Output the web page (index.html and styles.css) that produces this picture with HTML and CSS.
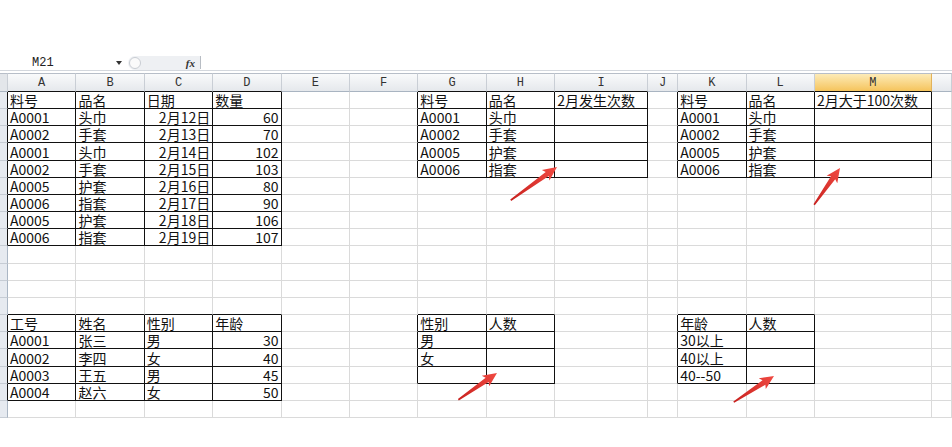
FILE: index.html
```html
<!DOCTYPE html>
<html>
<head>
    <title>Excel</title>
    <meta charset="utf-8">
    <link rel="stylesheet" href="styles.css">
</head>
<body>
    <div class="fbar">
        <div class="namebox">M21</div>
        <div class="drop"><span class="tri"></span></div>
        <div class="fxbox"><span class="knob"></span><span class="fx">fx</span></div>
        <div class="sep"></div>
    </div>

    <table class="grid">
        <colgroup>
            <col class="w-rh">
            <col class="w"><col class="w"><col class="w"><col class="w">
            <col class="w"><col class="w"><col class="w"><col class="w">
            <col class="w-i"><col class="w-j">
            <col class="w"><col class="w">
            <col class="w-m"><col class="w-n">
        </colgroup>
        <tr class="head"><th class="corner"></th><th class="et">A</th><th class="et">B</th><th class="et">C</th><th class="et">D</th><th>E</th><th>F</th><th class="et">G</th><th class="et">H</th><th class="et">I</th><th>J</th><th class="et">K</th><th class="et">L</th><th class="et sel">M</th><th></th></tr>
        <tr><td class="rh el"></td><td class="d">料号</td><td class="d">品名</td><td class="d">日期</td><td class="d">数量</td><td></td><td class="el"></td><td class="d">料号</td><td class="d">品名</td><td class="d">2月发生次数</td><td class="el"></td><td class="d">料号</td><td class="d">品名</td><td class="d">2月大于100次数</td><td></td></tr>
        <tr><td class="rh el"></td><td class="d">A0001</td><td class="d">头巾</td><td class="d r">2月12日</td><td class="d r">60</td><td></td><td class="el"></td><td class="d">A0001</td><td class="d">头巾</td><td class="d"></td><td class="el"></td><td class="d">A0001</td><td class="d">头巾</td><td class="d"></td><td></td></tr>
        <tr><td class="rh el"></td><td class="d">A0002</td><td class="d">手套</td><td class="d r">2月13日</td><td class="d r">70</td><td></td><td class="el"></td><td class="d">A0002</td><td class="d">手套</td><td class="d"></td><td class="el"></td><td class="d">A0002</td><td class="d">手套</td><td class="d"></td><td></td></tr>
        <tr><td class="rh el"></td><td class="d">A0001</td><td class="d">头巾</td><td class="d r">2月14日</td><td class="d r">102</td><td></td><td class="el"></td><td class="d">A0005</td><td class="d">护套</td><td class="d"></td><td class="el"></td><td class="d">A0005</td><td class="d">护套</td><td class="d"></td><td></td></tr>
        <tr><td class="rh el"></td><td class="d">A0002</td><td class="d">手套</td><td class="d r">2月15日</td><td class="d r">103</td><td></td><td class="el"></td><td class="d">A0006</td><td class="d">指套</td><td class="d"></td><td class="el"></td><td class="d">A0006</td><td class="d">指套</td><td class="d"></td><td></td></tr>
        <tr><td class="rh el"></td><td class="d">A0005</td><td class="d">护套</td><td class="d r">2月16日</td><td class="d r">80</td><td></td><td></td><td></td><td></td><td></td><td></td><td></td><td></td><td></td><td></td></tr>
        <tr><td class="rh el"></td><td class="d">A0006</td><td class="d">指套</td><td class="d r">2月17日</td><td class="d r">90</td><td></td><td></td><td></td><td></td><td></td><td></td><td></td><td></td><td></td><td></td></tr>
        <tr><td class="rh el"></td><td class="d">A0005</td><td class="d">护套</td><td class="d r">2月18日</td><td class="d r">106</td><td></td><td></td><td></td><td></td><td></td><td></td><td></td><td></td><td></td><td></td></tr>
        <tr><td class="rh el"></td><td class="d">A0006</td><td class="d">指套</td><td class="d r">2月19日</td><td class="d r">107</td><td></td><td></td><td></td><td></td><td></td><td></td><td></td><td></td><td></td><td></td></tr>
        <tr><td class="rh"></td><td></td><td></td><td></td><td></td><td></td><td></td><td></td><td></td><td></td><td></td><td></td><td></td><td></td><td></td></tr>
        <tr><td class="rh"></td><td></td><td></td><td></td><td></td><td></td><td></td><td></td><td></td><td></td><td></td><td></td><td></td><td></td><td></td></tr>
        <tr><td class="rh"></td><td></td><td></td><td></td><td></td><td></td><td></td><td></td><td></td><td></td><td></td><td></td><td></td><td></td><td></td></tr>
        <tr><td class="rh"></td><td class="et"></td><td class="et"></td><td class="et"></td><td class="et"></td><td></td><td></td><td class="et"></td><td class="et"></td><td></td><td></td><td class="et"></td><td class="et"></td><td></td><td></td></tr>
        <tr><td class="rh el"></td><td class="d">工号</td><td class="d">姓名</td><td class="d">性别</td><td class="d">年龄</td><td></td><td class="el"></td><td class="d">性别</td><td class="d">人数</td><td></td><td class="el"></td><td class="d">年龄</td><td class="d">人数</td><td></td><td></td></tr>
        <tr><td class="rh el"></td><td class="d">A0001</td><td class="d">张三</td><td class="d">男</td><td class="d r">30</td><td></td><td class="el"></td><td class="d">男</td><td class="d"></td><td></td><td class="el"></td><td class="d">30以上</td><td class="d"></td><td></td><td></td></tr>
        <tr><td class="rh el"></td><td class="d">A0002</td><td class="d">李四</td><td class="d">女</td><td class="d r">40</td><td></td><td class="el"></td><td class="d">女</td><td class="d"></td><td></td><td class="el"></td><td class="d">40以上</td><td class="d"></td><td></td><td></td></tr>
        <tr><td class="rh el"></td><td class="d">A0003</td><td class="d">王五</td><td class="d">男</td><td class="d r">45</td><td></td><td class="el"></td><td class="d"></td><td class="d"></td><td></td><td class="el"></td><td class="d">40--50</td><td class="d"></td><td></td><td></td></tr>
        <tr><td class="rh el"></td><td class="d">A0004</td><td class="d">赵六</td><td class="d">女</td><td class="d r">50</td><td></td><td></td><td></td><td></td><td></td><td></td><td></td><td></td><td></td><td></td></tr>
        <tr><td class="rh"></td><td></td><td></td><td></td><td></td><td></td><td></td><td></td><td></td><td></td><td></td><td></td><td></td><td></td><td></td></tr>
    </table>

    <!-- red pointer arrows drawn over the sheet -->
    <svg class="arrows" width="952" height="447" viewBox="0 0 952 447">
        <defs>
            <linearGradient id="red">
                <stop offset="0" stop-color="#c8211e"/>
                <stop offset="1" stop-color="#f04a42"/>
            </linearGradient>
        </defs>
        <polygon fill="url(#red)" transform="translate(557 167) rotate(-35.7)" points="-57,-0.8 -12,-2.6 -14,-6.5 0,0 -14,6.5 -12,2.6 -57,0.8"/>
        <polygon fill="url(#red)" transform="translate(840 168) rotate(-54.9)" points="-45,-0.8 -12,-2.6 -14,-6.5 0,0 -14,6.5 -12,2.6 -45,0.8"/>
        <polygon fill="url(#red)" transform="translate(497 373) rotate(-34.7)" points="-47,-0.8 -12,-2.6 -14,-6.5 0,0 -14,6.5 -12,2.6 -47,0.8"/>
        <polygon fill="url(#red)" transform="translate(774 376) rotate(-33)" points="-48,-0.8 -12,-2.6 -14,-6.5 0,0 -14,6.5 -12,2.6 -48,0.8"/>
    </svg>
</body>
</html>
```

FILE: styles.css
```css
body {
    margin: 0;
    width: 952px;
    height: 447px;
    overflow: hidden;
    position: relative;
    background-color: #fff;
    font-family: "Noto Sans CJK SC", sans-serif;
}

/* formula bar */
.fbar {
    display: flex;
    align-items: center;
    height: 15px;
    margin-top: 55px;
    margin-bottom: 2px;
    border-bottom: 1px solid #d3d7dd;
    font-family: "Liberation Mono", monospace;
    font-size: 12px;
    color: #222;
}

.namebox {
    width: 113px;
    padding-left: 32px;
    box-sizing: border-box;
}

.drop {
    width: 11px;
    display: flex;
    justify-content: center;
}

.tri {
    width: 0;
    height: 0;
    border-left: 3px solid transparent;
    border-right: 3px solid transparent;
    border-top: 4px solid #333;
}

.fxbox {
    display: flex;
    align-items: center;
    justify-content: space-between;
    width: 72px;
    height: 14px;
    margin-left: 4px;
    background-color: #eef0f3;
    border-radius: 8px 0 0 8px;
}

.knob {
    width: 10px;
    height: 10px;
    margin-left: 1px;
    border-radius: 50%;
    border: 1px solid #c9cdd3;
    background-color: #fafafa;
}

.fx {
    padding-right: 5px;
    font-family: "Liberation Serif", serif;
    font-style: italic;
    font-weight: bold;
    font-size: 11px;
    color: #333;
}

.sep {
    width: 1px;
    height: 13px;
    background-color: #b8bdc4;
}

/* sheet grid */
.grid {
    border-collapse: separate;
    border-spacing: 0;
    table-layout: fixed;
    width: 952px;
}

.w-rh { width: 8px; }
.w { width: 68.4px; }
.w-i { width: 93px; }
.w-j { width: 30px; }
.w-m { width: 117px; }
.w-n { width: 20px; }

.grid td,
.grid th {
    box-sizing: border-box;
    height: 17.17px;
    padding: 0 2px;
    border-right: 1px solid #dadada;
    border-bottom: 1px solid #dadada;
    font-size: 14px;
    line-height: 16px;
    white-space: nowrap;
    vertical-align: bottom;
    color: #111;
}

.head th {
    height: 19px;
    border-top: 1px solid #b7bec8;
    border-right-color: #c9ced5;
    border-bottom-color: #a9b4c1;
    background: linear-gradient(#f9fafb, #e5e8ec);
    font-family: "Liberation Mono", monospace;
    font-size: 12px;
    font-weight: normal;
    text-align: center;
    vertical-align: middle;
    color: #333;
}

.head th.sel {
    background: linear-gradient(#fdebb8, #f5c45c);
    border-right-color: #e2b25a;
}

.head th.corner {
    padding: 0;
    background: #e3e6ea;
}

.grid .rh {
    padding: 0;
    background-color: #e6eaf0;
    border-right-color: #aab6c4;
    border-bottom-color: #c6ccd4;
}

.grid .d {
    border-right-color: #111;
    border-bottom-color: #111;
}

.grid .el {
    border-right-color: #111;
}

.grid .et {
    border-bottom-color: #111;
}

.r {
    text-align: right;
}

.arrows {
    position: absolute;
    left: 0;
    top: 0;
    pointer-events: none;
}
```
